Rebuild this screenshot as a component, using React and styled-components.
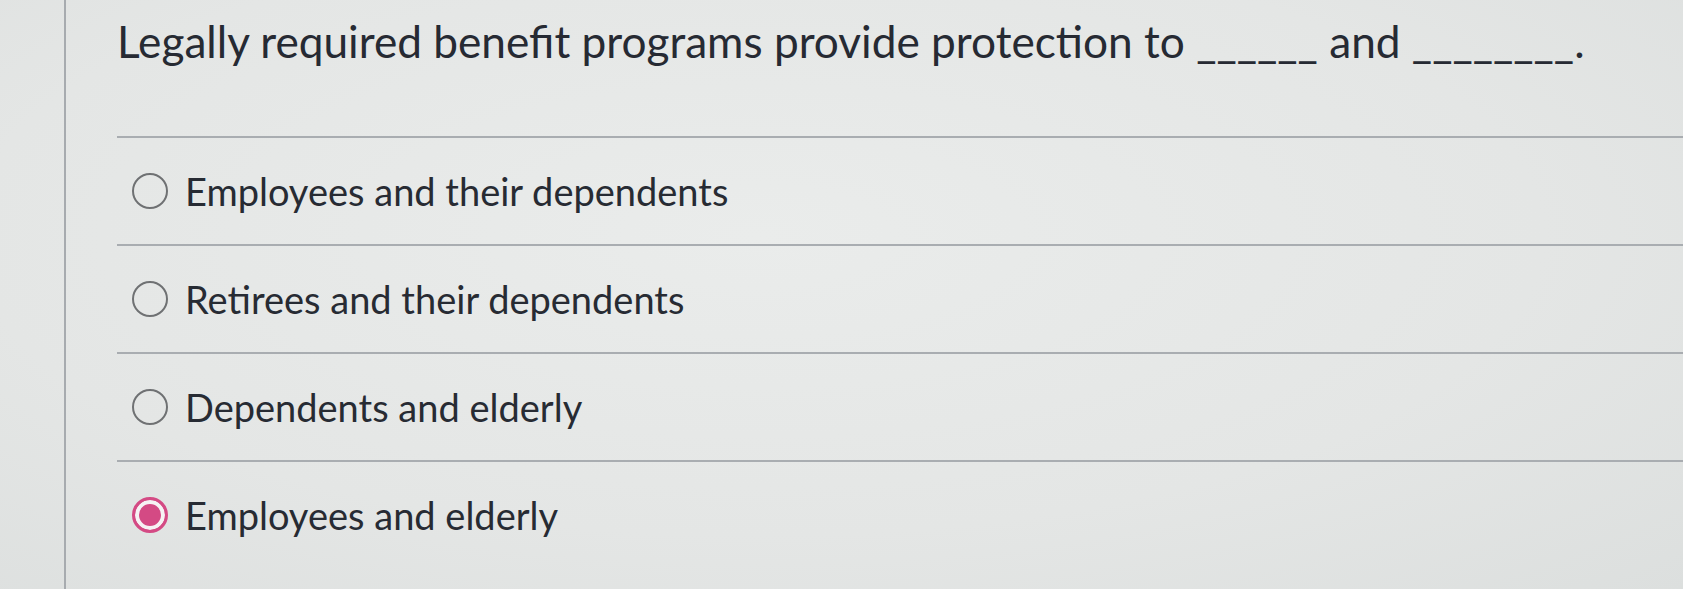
import React from "react";
import styled, { createGlobalStyle } from "styled-components";

const GlobalStyle = createGlobalStyle`
  html, body {
    margin: 0;
    padding: 0;
    background: #e3e5e4;
    font-family: Lato, "Noto Sans", sans-serif;
    overflow: hidden;
  }
`;

const Page = styled.div`
  width: 1683px;
  height: 589px;
  display: flex;
  background: radial-gradient(ellipse at 45% 40%, #eaeceb 0%, #e4e6e5 60%, #dcdfde 100%);
`;

const Gutter = styled.div`
  width: 64px;
  flex-shrink: 0;
  border-right: 2px solid #a7abaf;
`;

const Question = styled.div`
  flex: 1;
  padding: 16px 0 0 51px;
`;

const Title = styled.h1`
  margin: 0 0 70px 0;
  font-size: 44.2px;
  font-weight: 400;
  line-height: 50px;
  color: #262a33;
`;

const Options = styled.div`
  display: flex;
  flex-direction: column;
`;

const Option = styled.label`
  display: flex;
  align-items: center;
  gap: 17px;
  height: 106px;
  padding-left: 15px;
  border-top: 2px solid #a9adb1;
  font-size: 38px;
  color: #272b33;
  cursor: pointer;
`;

const Radio = styled.span`
  width: 36px;
  height: 36px;
  box-sizing: border-box;
  border-radius: 50%;
  flex-shrink: 0;
  border: ${(p) => (p.checked ? "3px solid #d44a84" : "2.5px solid #6f7173")};
  background: ${(p) => (p.checked ? "#d44a84" : "transparent")};
  box-shadow: ${(p) => (p.checked ? "inset 0 0 0 4px #f6f2f4" : "none")};
`;

const options = [
  { label: "Employees and their dependents", checked: false },
  { label: "Retirees and their dependents", checked: false },
  { label: "Dependents and elderly", checked: false },
  { label: "Employees and elderly", checked: true },
];

export default function App() {
  return (
    <Page>
      <GlobalStyle />
      <Gutter />
      <Question>
        <Title>Legally required benefit programs provide protection to ______ and ________.</Title>
        <Options>
          {options.map((o) => (
            <Option key={o.label}>
              <Radio checked={o.checked} />
              {o.label}
            </Option>
          ))}
        </Options>
      </Question>
    </Page>
  );
}
